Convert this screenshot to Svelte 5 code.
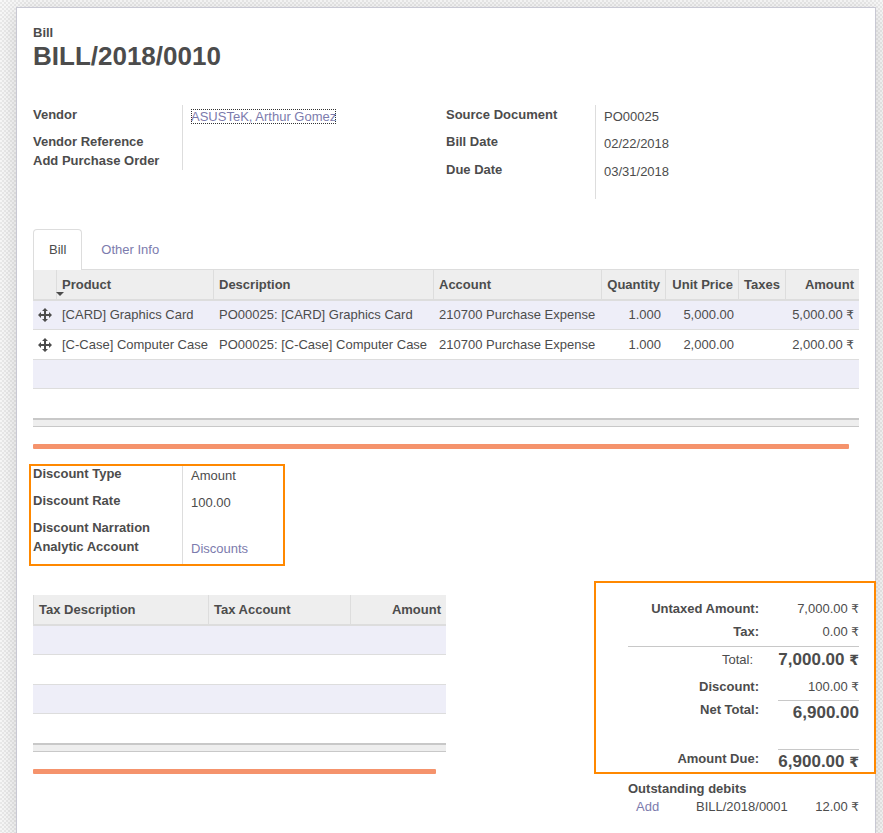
<script>
  const lines = [
    { product: '[CARD] Graphics Card', description: 'PO00025: [CARD] Graphics Card', account: '210700 Purchase Expense', qty: '1.000', price: '5,000.00', amount: '5,000.00' },
    { product: '[C-Case] Computer Case', description: 'PO00025: [C-Case] Computer Case', account: '210700 Purchase Expense', qty: '1.000', price: '2,000.00', amount: '2,000.00' }
  ];
</script>

{#snippet money(value)}{value} <span class="rupee">₹</span>{/snippet}

<div class="page">
  <main class="sheet">
    <header>
      <div class="kind">Bill</div>
      <h1>BILL/2018/0010</h1>
    </header>

    <section class="columns info">
      <dl class="group">
        <div class="row"><dt>Vendor</dt><dd><a class="focused" href="#vendor">ASUSTeK, Arthur Gomez</a></dd></div>
        <div class="row short"><dt>Vendor Reference</dt><dd></dd></div>
        <div class="row short"><dt>Add Purchase Order</dt><dd></dd></div>
      </dl>
      <dl class="group dates">
        <div class="row"><dt>Source Document</dt><dd>PO00025</dd></div>
        <div class="row"><dt>Bill Date</dt><dd>02/22/2018</dd></div>
        <div class="row last"><dt>Due Date</dt><dd>03/31/2018</dd></div>
      </dl>
    </section>

    <nav class="tabs">
      <a class="tab active" href="#bill">Bill</a>
      <a class="tab" href="#other">Other Info</a>
    </nav>

    <table class="list">
      <colgroup>
        <col class="c-handle" /><col class="c-product" /><col /><col class="c-account" />
        <col class="c-qty" /><col class="c-price" /><col class="c-taxes" /><col class="c-amount" />
      </colgroup>
      <thead>
        <tr>
          <th></th>
          <th class="sorted">Product</th>
          <th>Description</th>
          <th>Account</th>
          <th class="num">Quantity</th>
          <th class="num">Unit Price</th>
          <th>Taxes</th>
          <th class="num">Amount</th>
        </tr>
      </thead>
      <tbody>
        {#each lines as line}
          <tr>
            <td class="handle">
              <svg viewBox="0 0 14 14" width="14" height="14" aria-hidden="true">
                <path d="M7 0L10 3H8V6H11V4L14 7L11 10V8H8V11H10L7 14L4 11H6V8H3V10L0 7L3 4V6H6V3H4Z" />
              </svg>
            </td>
            <td>{line.product}</td>
            <td>{line.description}</td>
            <td>{line.account}</td>
            <td class="num">{line.qty}</td>
            <td class="num">{line.price}</td>
            <td></td>
            <td class="num total">{@render money(line.amount)}</td>
          </tr>
        {/each}
        <tr><td colspan="8"></td></tr>
        <tr><td colspan="8"></td></tr>
      </tbody>
      <tfoot><tr><td colspan="8"></td></tr></tfoot>
    </table>
    <div class="bar"></div>

    <section class="columns discount">
      <dl class="group">
        <div class="row"><dt>Discount Type</dt><dd>Amount</dd></div>
        <div class="row"><dt>Discount Rate</dt><dd>100.00</dd></div>
        <div class="row short"><dt>Discount Narration</dt><dd></dd></div>
        <div class="row"><dt>Analytic Account</dt><dd><a href="#discounts">Discounts</a></dd></div>
      </dl>
    </section>

    <section class="columns summary">
      <div class="taxes">
        <table class="list">
          <colgroup><col class="c-taxdesc" /><col /><col class="c-taxamount" /></colgroup>
          <thead>
            <tr><th>Tax Description</th><th>Tax Account</th><th class="num">Amount</th></tr>
          </thead>
          <tbody>
            <tr><td colspan="3"></td></tr>
            <tr><td colspan="3"></td></tr>
            <tr><td colspan="3"></td></tr>
            <tr><td colspan="3"></td></tr>
          </tbody>
          <tfoot><tr><td colspan="3"></td></tr></tfoot>
        </table>
        <div class="bar"></div>
      </div>

      <div class="side">
        <dl class="totals">
          <div class="sum"><dt>Untaxed Amount:</dt><dd>{@render money('7,000.00')}</dd></div>
          <div class="sum"><dt>Tax:</dt><dd>{@render money('0.00')}</dd></div>
          <div class="sum ruled"><dt class="light">Total:</dt><dd class="big">{@render money('7,000.00')}</dd></div>
          <div class="sum"><dt>Discount:</dt><dd>{@render money('100.00')}</dd></div>
          <div class="sum net"><dt>Net Total:</dt><dd class="big line">6,900.00</dd></div>
          <div class="sum due"><dt>Amount Due:</dt><dd class="big line">{@render money('6,900.00')}</dd></div>
        </dl>
        <div class="debits">
          <strong>Outstanding debits</strong>
          <div class="debit">
            <a href="#add">Add</a>
            <span>BILL/2018/0001</span>
            <span class="value">{@render money('12.00')}</span>
          </div>
        </div>
      </div>
    </section>
  </main>
</div>

<style>
  :global(body) {
    margin: 0;
    font-family: "Liberation Sans", Arial, sans-serif;
    font-size: 13px;
    line-height: 18px;
    color: #4c4c4c;
  }
  .page {
    display: flow-root;
    background: repeating-conic-gradient(#e9e9e9 0 25%, #f8f8f8 0 50%) 0 0 / 4px 4px;
  }
  .sheet {
    box-sizing: border-box;
    min-height: calc(100vh - 7px);
    margin: 7px 7px 0 16px;
    padding: 16px 16px 12px;
    background: #fff;
    border: 1px solid #c8c8d3;
    border-bottom: 0;
    box-shadow: 0 4px 20px rgba(0, 0, 0, 0.15);
  }
  a { color: #7c7bad; text-decoration: none; }
  h1 { margin: 0; font-size: 26px; line-height: 28px; }
  .kind { font-weight: bold; }
  dl, dd { margin: 0; }
  dt { font-weight: bold; }
  .rupee { font-family: "DejaVu Sans", sans-serif; font-size: 12px; line-height: 1; }

  .columns { display: flex; align-items: flex-start; }
  .info { margin-top: 35px; min-height: 124px; }
  .group { position: relative; width: 50%; }
  .row { display: flex; min-height: 27px; }
  .row dt {
    box-sizing: border-box;
    width: 150px;
    padding-top: 1px;
    border-right: 1px solid #ddd;
  }
  .row dd { padding: 3px 0 0 8px; }
  .row.short { min-height: 18px; }
  .row.short dd { padding-top: 0; }
  .dates .row + .row { min-height: 28px; }
  .dates .row.last { min-height: 39px; }
  .focused { outline: 1px dotted #333; outline-offset: -1px; }

  .tabs { display: flex; gap: 3px; border-bottom: 1px solid #ddd; }
  .tab {
    padding: 11px 15px 10px;
    border: 1px solid transparent;
    border-bottom: 0;
    line-height: 18px;
  }
  .tab.active {
    margin-bottom: -1px;
    padding-bottom: 11px;
    color: #4c4c4c;
    background: #fff;
    border-color: #ddd;
    border-radius: 4px 4px 0 0;
  }

  .list { width: 100%; table-layout: fixed; border-spacing: 0; white-space: nowrap; }
  .c-handle { width: 23px; }
  .c-product { width: 157px; }
  .c-account { width: 168px; }
  .c-qty { width: 64px; }
  .c-price { width: 73px; }
  .c-taxes { width: 47px; }
  .c-amount { width: 74px; }
  .c-taxdesc { width: 175px; }
  .c-taxamount { width: 96px; }
  th, td { box-sizing: border-box; padding: 0 5px; text-align: left; }
  th {
    height: 31px;
    background: #eee;
    border-left: 1px solid #ddd;
    border-bottom: 2px solid #ddd;
  }
  .num { text-align: right; }
  .sorted { position: relative; }
  .sorted::after {
    content: "";
    position: absolute;
    left: -1px;
    bottom: 3px;
    border: 4px solid transparent;
    border-top-color: #4c4c4c;
    border-bottom: 0;
  }
  tbody td {
    height: 29px;
    border-bottom: 1px solid #ddd;
  }
  tbody td:not(:first-child) { padding-left: 6px; }
  tbody tr:nth-child(2) td { height: 30px; }
  tbody tr:last-child td { border-bottom: 0; }
  tbody .num { padding-right: 4px; }
  tbody .total { padding-right: 5px; }
  tbody tr:nth-child(odd) { background: #eeeef8; }
  tbody .handle { padding: 0 0 0 5px; }
  .handle svg { display: block; fill: #4c4c4c; }
  tfoot td {
    height: 9px;
    padding: 0;
    background: #eee;
    border-top: 2px solid #c8c8c8;
    border-bottom: 1px solid #c8c8c8;
  }
  .bar {
    height: 5px;
    margin: 17px 10px 0 0;
    border-radius: 1px;
    background: #f5936c;
  }

  .discount { margin-top: 15px; }
  .discount .group::after {
    content: "";
    position: absolute;
    top: 0;
    bottom: -2px;
    left: -4px;
    width: 252px;
    border: 2px solid #ff8800;
    pointer-events: none;
  }
  .summary { margin-top: 31px; }
  .taxes { width: 50%; }
  .side { width: 231px; margin-left: auto; }
  .totals { position: relative; padding-top: 4px; }
  .totals::after {
    content: "";
    position: absolute;
    inset: -14px -17px 0 -34px;
    border: 2px solid #ff8800;
    pointer-events: none;
  }
  .sum { display: flex; justify-content: flex-end; line-height: 20px; margin-bottom: 3px; }
  .sum dt { padding-right: 19px; }
  .sum dt.light { padding-right: 25px; font-weight: normal; }
  .sum dd { box-sizing: border-box; width: 81px; text-align: right; white-space: nowrap; }
  .big { font-size: 17px; font-weight: bold; }
  .big .rupee { font-size: 14px; }
  .line { border-top: 1px solid #c8c8c8; padding-top: 2px; }
  .ruled { margin-top: 4px; border-top: 1px solid #c8c8c8; padding: 3px 0 4px; }
  .net { min-height: 46px; }
  .due { margin: 0; padding-bottom: 2px; }
  .debits { padding-top: 6px; }
  .debits strong { display: block; }
  .debit { display: flex; padding-left: 8px; }
  .debit a { width: 60px; }
  .debit .value { margin-left: auto; }
</style>
